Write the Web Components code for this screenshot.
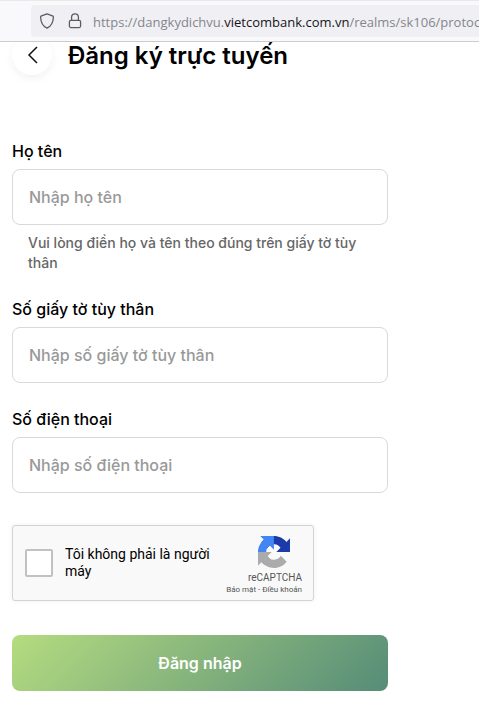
<!DOCTYPE html>
<html lang="vi">
<head>
<meta charset="utf-8">
<meta name="viewport" content="width=device-width, initial-scale=1">
<title>Đăng ký trực tuyến</title>
<style>
  body {
    margin: 0;
    background: #fff;
    color: #000;
    font-family: Inter, "Liberation Sans", sans-serif;
  }
</style>
</head>
<body>
<address-bar>
  <span slot="before">https://dangkydichvu.</span><span slot="domain">vietcombank.com.vn</span><span slot="after">/realms/sk106/protocol</span>
</address-bar>
<signup-page>
  <page-heading slot="heading">Đăng ký trực tuyến</page-heading>
  <text-field label="Họ tên" placeholder="Nhập họ tên" name="fullname">Vui lòng điền họ và tên theo đúng trên giấy tờ tùy thân</text-field>
  <text-field label="Số giấy tờ tùy thân" placeholder="Nhập số giấy tờ tùy thân" name="idnumber"></text-field>
  <text-field label="Số điện thoại" placeholder="Nhập số điện thoại" name="phone"></text-field>
  <captcha-box slot="actions">Tôi không phải là người máy</captcha-box>
  <submit-button slot="actions">Đăng nhập</submit-button>
</signup-page>

<script>
class AddressBar extends HTMLElement {
  constructor() {
    super();

    this.attachShadow({ mode: "open" }).innerHTML = `
      <style>
        :host {
          display: block;
          position: relative;
          z-index: 1;
          box-sizing: border-box;
          padding: 4px 0 4px 31px;
          background: #f9f9fb;
          border-top: 1px solid #e9e9ed;
          border-bottom: 1px solid #cccccf;
          overflow: hidden;
        }
        .box {
          display: flex;
          align-items: center;
          height: 32px;
          padding-left: 8px;
          background: #f0f0f4;
          border-radius: 4px 0 0 4px;
        }
        svg {
          flex: none;
          width: 16px;
          height: 16px;
          margin-right: 12px;
          fill: none;
          stroke: #5b5b66;
          stroke-width: 1.3;
          stroke-linejoin: round;
        }
        svg + svg {
          margin-right: 10px;
        }
        .url {
          white-space: nowrap;
          padding-top: 2px;
          font: 13px/20px "Open Sans", "Noto Sans", sans-serif;
          color: #85858c;
        }
        .domain {
          color: #15141a;
        }
      </style>
      <div class="box">
        <svg viewBox="0 0 16 16"><path d="M8 .9 14.1 3.2 14.4 4C14.2 9.4 12.2 13.3 8 15.2 3.8 13.3 1.8 9.4 1.6 4L1.9 3.2Z"/></svg>
        <svg viewBox="0 0 16 16"><rect x="2.4" y="7.4" width="11.2" height="7.2" rx="1.500"/><path d="M4.600 7.400V4.200a3.400 3.400 0 0 1 6.800 0v3.200"/></svg>
        <div class="url"><slot name="before"></slot><span class="domain"><slot name="domain"></slot></span><slot name="after"></slot></div>
      </div>
    `;
  }
}

class SignupPage extends HTMLElement {
  constructor() {
    super();

    this.attachShadow({ mode: "open" }).innerHTML = `
      <style>
        :host {
          display: block;
          box-sizing: border-box;
          max-width: 400px;
          padding: 0 12px 24px;
          margin-top: -7px;
        }
        form, .actions {
          display: flex;
          flex-direction: column;
        }
        form {
          gap: 24px;
          margin-top: 64px;
        }
        .actions {
          gap: 32px;
          margin-top: 8px;
        }
      </style>
      <slot name="heading"></slot>
      <form>
        <slot></slot>
        <div class="actions"><slot name="actions"></slot></div>
      </form>
    `;
  }
}

class PageHeading extends HTMLElement {
  constructor() {
    super();

    this.attachShadow({ mode: "open" }).innerHTML = `
      <style>
        :host {
          display: flex;
          align-items: center;
          gap: 16px;
        }
        button {
          display: flex;
          align-items: center;
          justify-content: center;
          width: 40px;
          height: 40px;
          padding: 0;
          border: 0;
          border-radius: 50%;
          background: #fff;
          box-shadow: 0 4px 8px rgba(0, 0, 0, .05);
        }
        h1 {
          margin: 0;
          padding-top: 2px;
          font-size: 24px;
          line-height: 32px;
          font-weight: 600;
          white-space: nowrap;
        }
      </style>
      <button type="button" aria-label="Quay lại">
        <svg width="24" height="24" viewBox="0 0 24 24" fill="none" stroke="#111" stroke-width="1.5"><path d="M17 4 9 12l8 8"/></svg>
      </button>
      <h1><slot></slot></h1>
    `;
  }
}

class TextField extends HTMLElement {
  constructor() {
    super();

    this.attachShadow({ mode: "open" }).innerHTML = `
      <style>
        :host {
          display: block;
        }
        label {
          display: block;
          margin-bottom: 6px;
          font-size: 16px;
          line-height: 24px;
          font-weight: 500;
        }
        input {
          display: block;
          box-sizing: border-box;
          width: 100%;
          height: 56px;
          padding: 0 16px;
          border: 1px solid #d9d9d9;
          border-radius: 8px;
          background: #fff;
          color: inherit;
          font: inherit;
          font-size: 16px;
          font-weight: 500;
        }
        input::placeholder {
          color: #999;
          opacity: 1;
        }
        p {
          margin: 8px 16px 0;
          color: #666;
          font-size: 14px;
          line-height: 20px;
          font-weight: 500;
        }
        p[hidden] {
          display: none;
        }
      </style>
      <label for="input"></label>
      <input id="input" type="text">
      <p id="hint"><slot></slot></p>
    `;

    this._label = this.shadowRoot.querySelector("label");
    this._input = this.shadowRoot.querySelector("input");
    this._hint = this.shadowRoot.querySelector("p");
  }

  connectedCallback() {
    this._label.textContent = this.getAttribute("label");
    this._input.placeholder = this.getAttribute("placeholder");
    this._input.name = this.getAttribute("name");
    this._hint.hidden = !this.textContent.trim();
    if (!this._hint.hidden) {
      this._input.setAttribute("aria-describedby", "hint");
    }
  }
}

class CaptchaBox extends HTMLElement {
  constructor() {
    super();

    this.attachShadow({ mode: "open" }).innerHTML = `
      <style>
        :host {
          display: block;
          max-width: 302px;
          padding-bottom: 2px;
          font-family: Roboto, "Liberation Sans", sans-serif;
        }
        .box {
          display: flex;
          align-items: center;
          box-sizing: border-box;
          height: 76px;
          padding: 0 11px 0 12px;
          border: 1px solid #d3d3d3;
          border-radius: 3px;
          background: #f9f9f9;
          box-shadow: 0 0 4px 1px rgba(0, 0, 0, .04);
        }
        input {
          appearance: none;
          flex: none;
          box-sizing: border-box;
          width: 28px;
          height: 28px;
          margin: 0 12px 0 0;
          border: 2px solid #c1c1c1;
          border-radius: 2px;
          background: #fff;
        }
        label {
          flex: 1;
          color: #000;
          font-size: 14px;
          line-height: 17px;
        }
        .brand {
          display: flex;
          flex: none;
          flex-direction: column;
          align-items: flex-end;
          align-self: flex-start;
          padding-top: 10px;
          color: #555;
          font-size: 10px;
          line-height: 12px;
        }
        svg {
          margin: 0 12px 4px 0;
        }
        .links {
          font-size: 8px;
          white-space: nowrap;
        }
        a {
          color: inherit;
          text-decoration: none;
        }
      </style>
      <div class="box">
        <input id="check" type="checkbox">
        <label for="check"><slot></slot></label>
        <div class="brand">
          <svg width="32" height="32" viewBox="0 0 64 64">
            <path fill="#1c3aa9" d="M64 31.955l-.033-1.37V4.687l-7.16 7.16C50.948 4.674 42.033.093 32.05.093c-10.4 0-19.622 4.96-25.458 12.64l11.736 11.86a15.55 15.55 0 0 1 4.754-5.334c2.05-1.6 4.952-2.906 8.968-2.906.485 0 .86.057 1.135.163 4.976.393 9.288 3.14 11.828 7.124l-8.307 8.307L64 31.953"/>
            <path fill="#4285f4" d="M31.862.094l-1.37.033H4.594l7.16 7.16C4.58 13.147 0 22.06 0 32.046c0 10.4 4.96 19.622 12.64 25.458L24.5 45.768a15.55 15.55 0 0 1-5.334-4.754c-1.6-2.05-2.906-4.952-2.906-8.968 0-.485.057-.86.163-1.135.393-4.976 3.14-9.288 7.124-11.828l8.307 8.307L31.86.095"/>
            <path fill="#ababab" d="M.001 32.045l.033 1.37v25.898l7.16-7.16c5.86 7.173 14.774 11.754 24.76 11.754 10.4 0 19.622-4.96 25.458-12.64l-11.736-11.86a15.55 15.55 0 0 1-4.754 5.334c-2.05 1.6-4.952 2.906-8.968 2.906-.485 0-.86-.057-1.135-.163-4.976-.393-9.288-3.14-11.828-7.124l8.307-8.307c-10.522.04-22.4.066-27.295-.005"/>
          </svg>
          <div class="name">reCAPTCHA</div>
          <div class="links"><a href="#privacy">Bảo mật</a> - <a href="#terms">Điều khoản</a></div>
        </div>
      </div>
    `;
  }
}

class SubmitButton extends HTMLElement {
  constructor() {
    super();

    this.attachShadow({ mode: "open" }).innerHTML = `
      <style>
        :host {
          display: block;
        }
        button {
          display: block;
          width: 100%;
          height: 56px;
          padding: 0 16px;
          border: 0;
          border-radius: 8px;
          background: linear-gradient(135deg, #b5dc80, #568c78);
          color: #fff;
          font: inherit;
          font-size: 16px;
          font-weight: 600;
        }
      </style>
      <button type="submit"><slot></slot></button>
    `;
  }
}

window.customElements.define("address-bar", AddressBar);
window.customElements.define("signup-page", SignupPage);
window.customElements.define("page-heading", PageHeading);
window.customElements.define("text-field", TextField);
window.customElements.define("captcha-box", CaptchaBox);
window.customElements.define("submit-button", SubmitButton);
</script>
</body>
</html>
